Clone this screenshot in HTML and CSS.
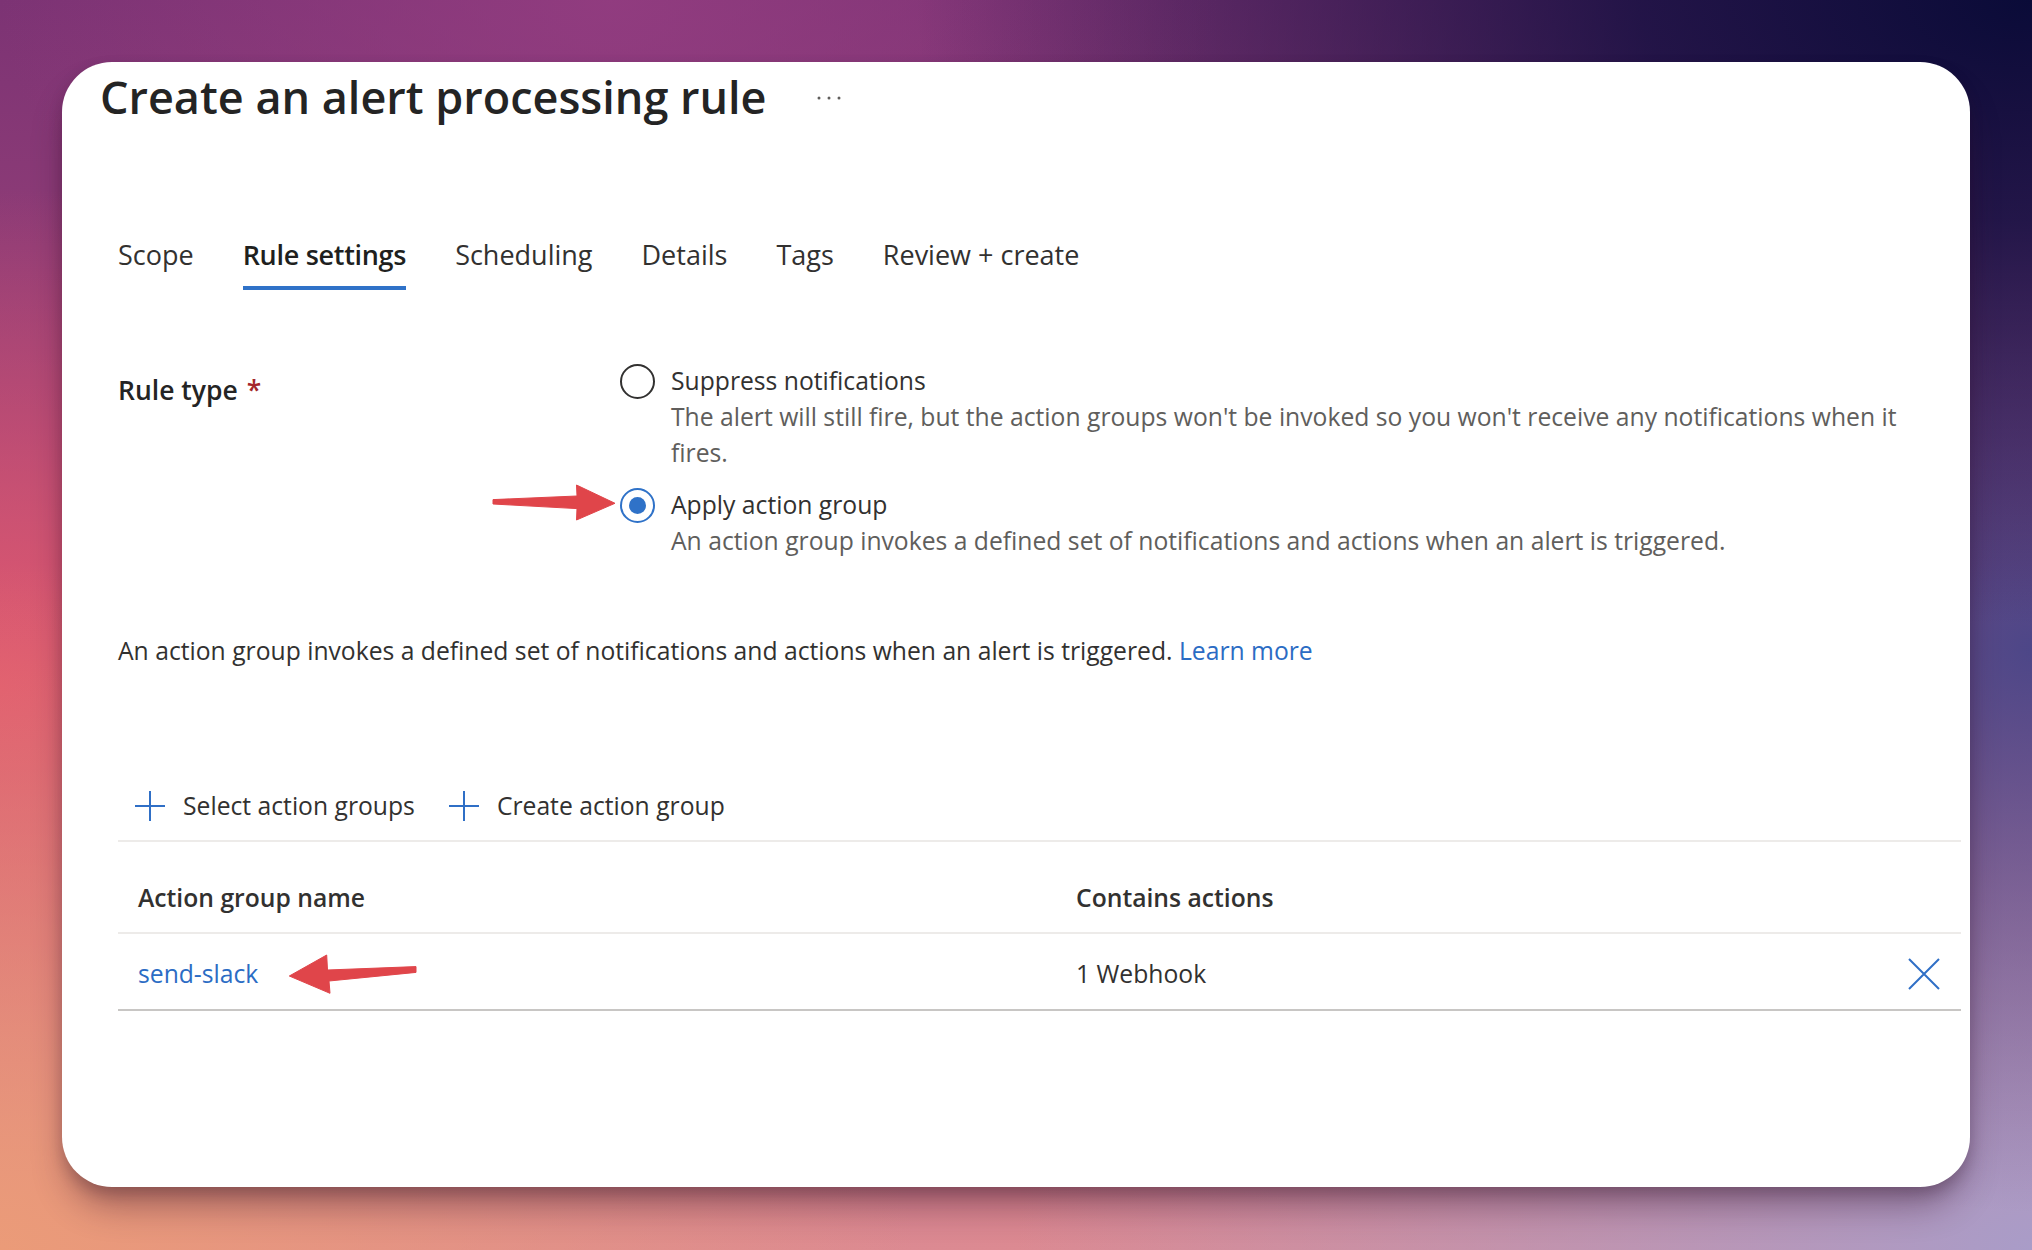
FILE: index.html
```html
<!DOCTYPE html>
<html lang="en">
<head>
<meta charset="utf-8">
<title>Create an alert processing rule</title>
<link rel="stylesheet" href="styles.css">
</head>
<body>
<div class="card">
  <header class="title-bar">
    <h1 class="title">Create an alert processing rule</h1>
    <span class="more" aria-label="More">
      <svg width="24" height="4" viewBox="0 0 24 4"><circle cx="2" cy="2" r="1.5"/><circle cx="12" cy="2" r="1.5"/><circle cx="22" cy="2" r="1.5"/></svg>
    </span>
  </header>

  <div class="content">
    <nav class="tabs">
      <span class="tab">Scope</span>
      <span class="tab active">Rule settings</span>
      <span class="tab">Scheduling</span>
      <span class="tab">Details</span>
      <span class="tab">Tags</span>
      <span class="tab">Review + create</span>
    </nav>

    <section class="field">
      <div class="field-label">Rule type <span class="req">*</span></div>
      <div class="options">
        <div class="option">
          <span class="radio"></span>
          <div class="option-text">
            <div class="option-title">Suppress notifications</div>
            <div class="option-desc">The alert will still fire, but the action groups won't be invoked so you won't receive any notifications when it fires.</div>
          </div>
        </div>
        <div class="option selected">
          <span class="radio"><span class="dot"></span></span>
          <div class="option-text">
            <div class="option-title">Apply action group</div>
            <div class="option-desc">An action group invokes a defined set of notifications and actions when an alert is triggered.</div>
          </div>
        </div>
      </div>
    </section>

    <p class="info">An action group invokes a defined set of notifications and actions when an alert is triggered. <a class="link" href="#">Learn more</a></p>

    <div class="toolbar">
      <span class="cmd">
        <svg class="plus" width="30" height="30" viewBox="0 0 30 30"><path d="M15 0V30M0 15H30"/></svg>
        Select action groups
      </span>
      <span class="cmd">
        <svg class="plus" width="30" height="30" viewBox="0 0 30 30"><path d="M15 0V30M0 15H30"/></svg>
        Create action group
      </span>
    </div>

    <div class="table">
      <div class="row head">
        <div class="cell name">Action group name</div>
        <div class="cell">Contains actions</div>
        <div class="cell act"></div>
      </div>
      <div class="row body-row">
        <div class="cell name"><a class="link" href="#">send-slack</a></div>
        <div class="cell">1 Webhook</div>
        <div class="cell act">
          <svg class="xicon" width="32" height="32" viewBox="0 0 32 32"><path d="M1 1L31 31M31 1L1 31"/></svg>
        </div>
      </div>
    </div>
  </div>

  <svg class="annot arrow-right" width="130" height="45" viewBox="0 0 130 45">
    <polygon points="3,19.6 87,16 86.5,5 125,23.3 86.5,40 87,28.6 3,24"/>
  </svg>
  <svg class="annot arrow-left" width="135" height="48" viewBox="0 0 135 48">
    <polygon points="4.3,26 41.7,5 42.5,20 131,16.6 131,22.4 44,31 45,43.3"/>
  </svg>
</div>
</body>
</html>
```

FILE: styles.css
```css
html, body {
  margin: 0;
}

body {
  width: 2032px;
  height: 1250px;
  box-sizing: border-box;
  padding: 62px 62px 63px 62px;
  overflow: hidden;
  font-family: "Open Sans", "Noto Sans", "Liberation Sans", sans-serif;
  color: #323130;
  background:
    radial-gradient(55% 50% at 100% 0%, #0a0b38 0%, rgba(12, 12, 60, 0.8) 35%, rgba(12, 12, 60, 0) 100%),
    radial-gradient(28% 45% at 100% 52%, rgba(66, 68, 136, 0.9) 0%, rgba(66, 68, 136, 0) 100%),
    radial-gradient(50% 55% at 100% 100%, #a99cc8 0%, rgba(169, 156, 200, 0) 100%),
    radial-gradient(45% 55% at 0% 100%, #eb9b78 0%, rgba(235, 155, 120, 0) 100%),
    radial-gradient(30% 40% at 0% 55%, #e0566e 0%, rgba(224, 86, 110, 0) 100%),
    radial-gradient(30% 30% at 30% 0%, rgba(150, 62, 130, 0.8) 0%, rgba(150, 62, 130, 0) 100%),
    linear-gradient(to bottom, #7c3374 0%, #9c4379 35%, #c86882 70%, #dc8a92 100%);
}

.card {
  position: relative;
  height: 1125px;
  box-sizing: border-box;
  padding-top: 7px;
  background: #ffffff;
  border-radius: 50px;
  box-shadow: 0 24px 36px -8px rgba(50, 16, 40, 0.45), 0 6px 14px rgba(30, 10, 30, 0.18);
}

/* Title */
.title-bar {
  display: flex;
  align-items: center;
  padding-left: 38px;
}

.title {
  margin: 0;
  font-size: 45px;
  line-height: 56px;
  font-weight: 600;
  color: #242424;
}

.more {
  display: flex;
  margin-left: 50px;
  margin-top: 2px;
}

.more svg {
  fill: #605e5c;
}

/* Content */
.content {
  padding: 0 9px 0 56px;
}

.tabs {
  display: flex;
  gap: 49px;
  margin-top: 112px;
}

.tab {
  font-size: 27px;
  line-height: 36px;
  padding-bottom: 13px;
  border-bottom: 4px solid transparent;
  color: #323130;
}

.tab.active {
  font-weight: 600;
  letter-spacing: -0.3px;
  color: #201f1e;
  border-bottom-color: #2f72c8;
}

/* Rule type */
.field {
  display: flex;
  margin-top: 73px;
}

.field-label {
  width: 502px;
  flex: none;
  padding-top: 9px;
  font-size: 26.5px;
  line-height: 36px;
  font-weight: 600;
  color: #242424;
}

.req {
  color: #a4262c;
  margin-left: 2px;
}

.options {
  display: flex;
  flex-direction: column;
  gap: 16px;
}

.option {
  display: flex;
  gap: 16px;
}

.radio {
  flex: none;
  width: 35px;
  height: 35px;
  box-sizing: border-box;
  border: 2px solid #323130;
  border-radius: 50%;
  margin-top: 1px;
  display: flex;
  align-items: center;
  justify-content: center;
}

.option.selected .radio {
  border-color: #2f72c8;
}

.dot {
  width: 17px;
  height: 17px;
  border-radius: 50%;
  background: #2f72c8;
}

.option-text {
  width: 1250px;
  font-size: 24.7px;
  line-height: 36px;
}

.option-title {
  color: #323130;
}

.option-desc {
  color: #605e5c;
}

/* Info */
.info {
  margin: 74px 0 0;
  font-size: 24.7px;
  line-height: 36px;
  color: #323130;
}

.link {
  color: #2b6cc4;
  text-decoration: none;
}

/* Toolbar */
.toolbar {
  display: flex;
  gap: 34px;
  margin-top: 119px;
  padding: 0 0 16px 17px;
  border-bottom: 2px solid #edebe9;
}

.cmd {
  display: flex;
  align-items: center;
  gap: 18px;
  font-size: 24.7px;
  line-height: 36px;
  color: #323130;
}

.plus {
  flex: none;
  stroke: #2f6fc6;
  stroke-width: 2;
  fill: none;
}

/* Table */
.row {
  display: grid;
  grid-template-columns: 958px 1fr auto;
  align-items: center;
  font-size: 24.7px;
  line-height: 36px;
}

.row.head {
  padding: 38px 0 16px;
  border-bottom: 2px solid #edebe9;
  font-weight: 600;
  color: #323130;
}

.row.body-row {
  padding: 22px 0 17px;
  border-bottom: 2px solid #c8c6c4;
}

.cell.name {
  padding-left: 20px;
}

.cell.act {
  display: flex;
  padding-right: 21px;
}

.xicon {
  stroke: #2f6fc6;
  stroke-width: 2;
  fill: none;
}

/* Annotations */
.annot {
  position: absolute;
  fill: #e0454a;
  stroke: #e0454a;
  stroke-width: 1;
  stroke-linejoin: round;
}

.arrow-right {
  left: 428px;
  top: 418px;
}

.arrow-left {
  left: 223px;
  top: 888px;
}
```
